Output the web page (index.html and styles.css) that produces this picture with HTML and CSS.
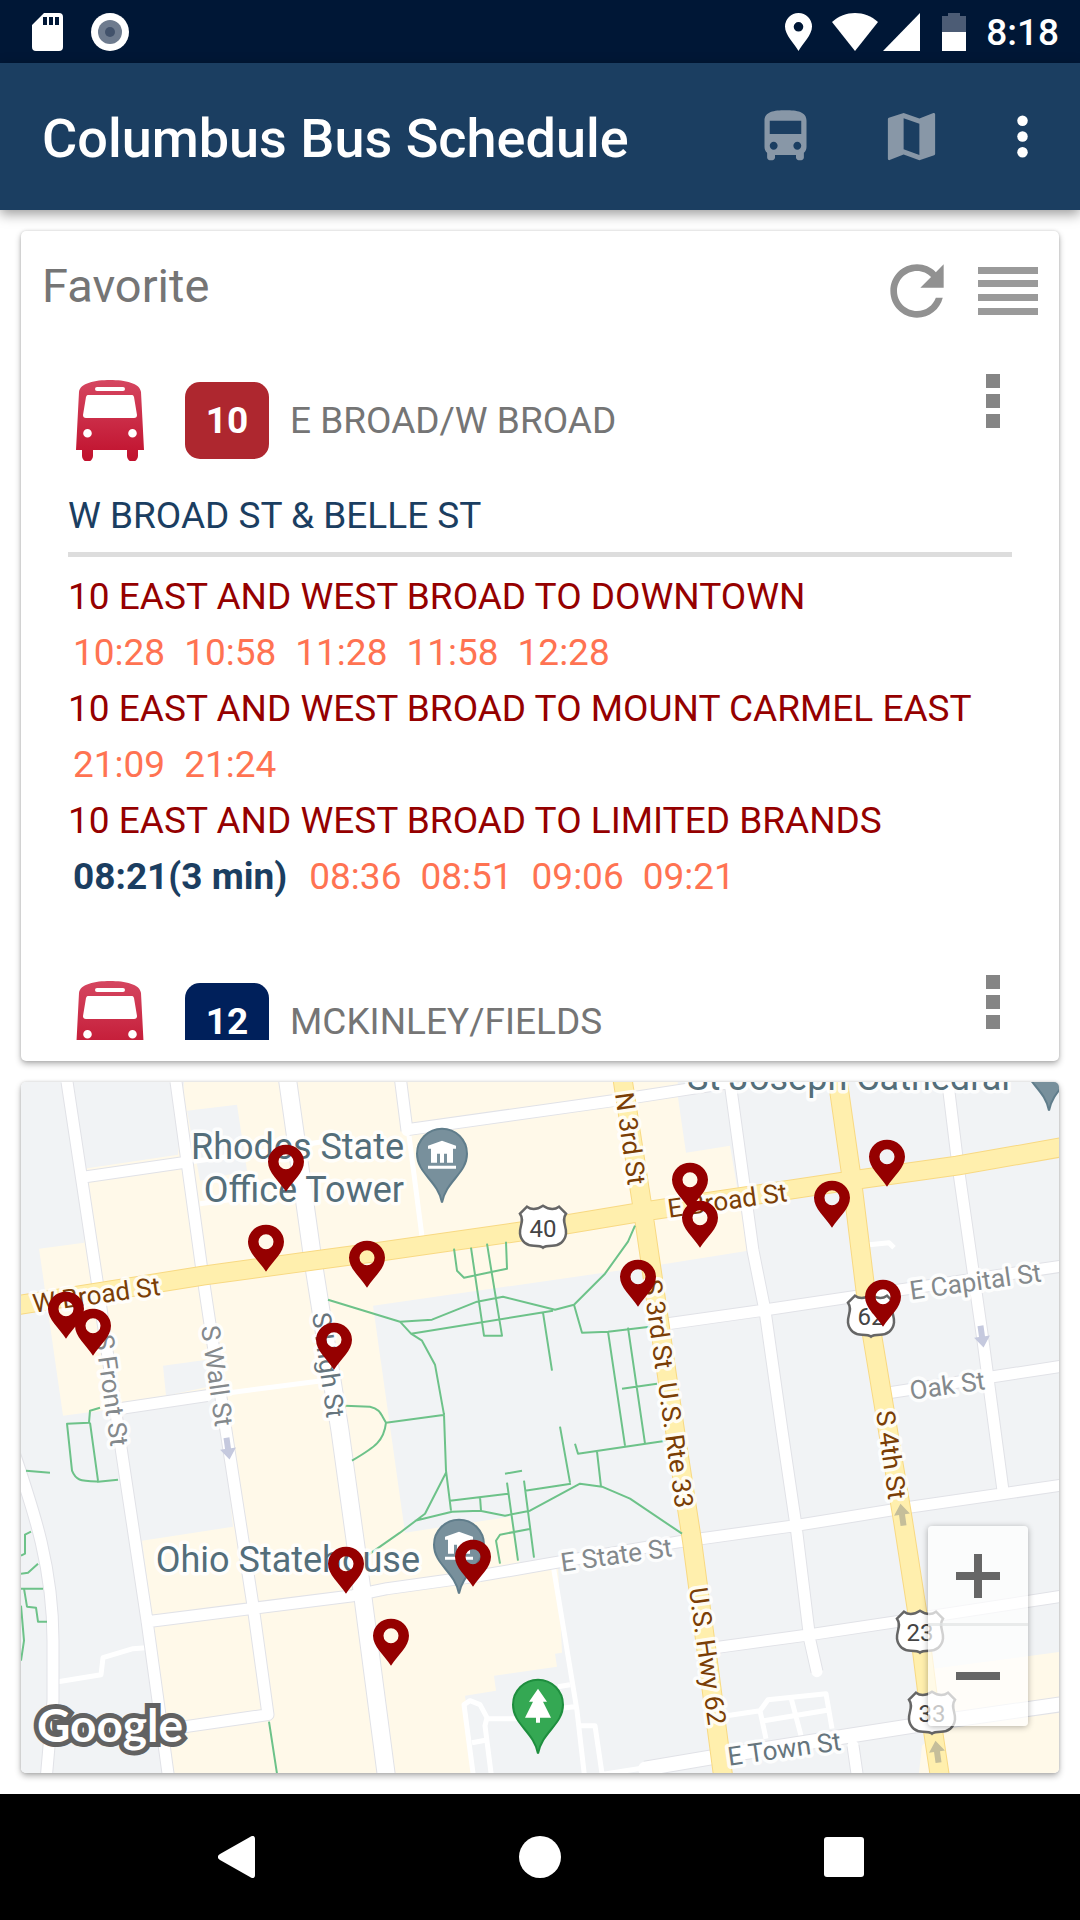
FILE: index.html
```html
<!DOCTYPE html>
<html lang="en">

<head>
    <meta charset="UTF-8">
    <meta name="viewport" content="width=device-width, initial-scale=1.0">
    <title>Columbus Bus Schedule</title>
    <link rel="stylesheet" href="styles.css">
</head>

<body>

    <!-- status bar -->
    <div class="status">
        <div class="status-left">
            <svg width="31" height="38" viewBox="0 0 31 38"><path fill="#fff" fill-rule="evenodd" d="M12 0h15a4 4 0 0 1 4 4v30a4 4 0 0 1-4 4H4a4 4 0 0 1-4-4V12zM11 4v8h4V4zm6 0v8h4V4zm6 0v8h4V4z"/></svg>
            <svg width="38" height="38" viewBox="0 0 38 38"><circle cx="19" cy="19" r="19" fill="#fff"/><circle cx="19" cy="19" r="12" fill="#6e7b8e"/><circle cx="19" cy="19" r="5" fill="#42526b"/></svg>
        </div>
        <div class="status-right">
            <svg class="loc" width="27" height="38" viewBox="0 0 27 38"><path fill="#fff" fill-rule="evenodd" d="M13.500 38C9 30 0 22 0 13.500a13.500 13.500 0 0 1 27 0C27 22 18 30 13.500 38zm0-29a4.800 4.800 0 1 0 0 9.600 4.800 4.800 0 0 0 0-9.600z"/></svg>
            <svg width="46" height="38" viewBox="0 0 46 38"><path fill="#fff" d="M0 9C13-3 33-3 46 9L23 38z"/></svg>
            <svg class="signal" width="37" height="38" viewBox="0 0 37 38"><path fill="#fff" d="M37 0v38H0z"/></svg>
            <svg class="battery" width="24" height="38" viewBox="0 0 24 38"><path fill="#4c5c75" d="M0 3h6V0h12v3h6v16H0z"/><path fill="#fff" d="M0 19h24v19H0z"/></svg>
            <span class="clock">8:18</span>
        </div>
    </div>

    <!-- app bar -->
    <header class="appbar">
        <h1>Columbus Bus Schedule</h1>
        <button class="tool" aria-label="Buses">
            <svg width="63" height="63" viewBox="0 0 24 24"><path d="M4 16c0 .88.39 1.670 1 2.220V20c0 .55.45 1 1 1h1c.55 0 1-.45 1-1v-1h8v1c0 .55.45 1 1 1h1c.55 0 1-.45 1-1v-1.780c.61-.55 1-1.340 1-2.220V6c0-3.500-3.580-4-8-4s-8 .5-8 4v10zm3.500 1c-.83 0-1.500-.67-1.500-1.500S6.670 14 7.500 14s1.500.67 1.500 1.500S8.330 17 7.500 17zm9 0c-.83 0-1.500-.67-1.500-1.500s.67-1.500 1.500-1.500 1.500.67 1.500 1.500-.67 1.500-1.500 1.500zm1.500-6H6V6h12v5z"/></svg>
        </button>
        <button class="tool" aria-label="Map">
            <svg width="63" height="63" viewBox="0 0 24 24"><path d="M20.500 3l-.16.03L15 5.100 9 3 3.360 4.900c-.21.07-.36.25-.36.48V20.500c0 .28.22.5.5.5l.16-.03L9 18.900l6 2.100 5.640-1.900c.21-.07.36-.25.36-.48V3.500c0-.28-.22-.5-.5-.5zM15 19l-6-2.110V5l6 2.110V19z"/></svg>
        </button>
        <button class="tool more" aria-label="More options">
            <svg width="63" height="63" viewBox="0 0 24 24"><circle cx="12" cy="6" r="2"/><circle cx="12" cy="12" r="2"/><circle cx="12" cy="18" r="2"/></svg>
        </button>
    </header>

    <main>
        <!-- favorite list -->
        <section class="card favorite">
            <div class="card-head">
                <h2>Favorite</h2>
                <button aria-label="Refresh">
                    <svg width="80" height="80" viewBox="0 0 24 24"><path fill="#919191" d="M17.650 6.350C16.200 4.900 14.210 4 12 4c-4.420 0-7.990 3.580-7.990 8s3.570 8 7.990 8c3.730 0 6.840-2.550 7.730-6h-2.080c-.82 2.330-3.040 4-5.650 4-3.310 0-6-2.690-6-6s2.690-6 6-6c1.660 0 3.140.69 4.220 1.780L13 11h7V4l-2.350 2.350z"/></svg>
                </button>
                <button aria-label="Reorder">
                    <svg width="60" height="48" viewBox="0 0 60 48"><path fill="#9a9a9a" d="M0 0h60v7H0zM0 13h60v7H0zM0 27h60v7H0zM0 41h60v7H0z"/></svg>
                </button>
            </div>

            <div class="list">
                <article class="item">
                    <div class="route">
                        <svg class="bus" width="68" height="81" viewBox="0 0 68 81"><use href="#bus"/></svg>
                        <span class="badge red">10</span>
                        <span class="name">E BROAD/W BROAD</span>
                        <button class="item-menu" aria-label="Route menu"><i></i><i></i><i></i></button>
                    </div>
                    <h3>W BROAD ST &amp; BELLE ST</h3>
                    <div class="trips">
                        <p class="dest">10 EAST AND WEST BROAD TO DOWNTOWN</p>
                        <p class="times"><span>10:28</span><span>10:58</span><span>11:28</span><span>11:58</span><span>12:28</span></p>
                        <p class="dest">10 EAST AND WEST BROAD TO MOUNT CARMEL EAST</p>
                        <p class="times"><span>21:09</span><span>21:24</span></p>
                        <p class="dest">10 EAST AND WEST BROAD TO LIMITED BRANDS</p>
                        <p class="times"><b>08:21(3 min)</b><span>08:36</span><span>08:51</span><span>09:06</span><span>09:21</span></p>
                    </div>
                </article>
                <article class="item">
                    <div class="route">
                        <svg class="bus" width="68" height="81" viewBox="0 0 68 81"><use href="#bus"/></svg>
                        <span class="badge navy">12</span>
                        <span class="name">MCKINLEY/FIELDS</span>
                        <button class="item-menu" aria-label="Route menu"><i></i><i></i><i></i></button>
                    </div>
                </article>
            </div>
        </section>

        <!-- map -->
        <section class="card map">
            <svg class="canvas" viewBox="21 1081 1038 692" preserveAspectRatio="xMidYMid slice">
                <defs>
                    <linearGradient id="busRed" x1="0" y1="0" x2="0" y2="1">
                        <stop offset="0" stop-color="#d54660"/>
                        <stop offset="1" stop-color="#c0102c"/>
                    </linearGradient>
                    <path id="bus" fill="url(#busRed)" fill-rule="evenodd" d="M3 12C4 3 19 0 34 0s30 3 31 12l3 58h-6v6a5 5 0 0 1-11 0v-6H17v6a5 5 0 0 1-11 0v-6H0zM21 7a2 2 0 0 0 0 4h26a2 2 0 0 0 0-4zM13 15c-2 0-2 0-3 2L7 35c0 2 1 3 3 3h48c2 0 3-1 3-3l-3-18c-1-2-1-2-3-2zM11.500 49a4.300 4.300 0 1 0 0 8.600 4.300 4.300 0 0 0 0-8.600zm45 0a4.300 4.300 0 1 0 0 8.600 4.300 4.300 0 0 0 0-8.600z"/>
                    <path id="pin" fill="#950000" fill-rule="evenodd" d="M0 0C-7-11-18-19-18-30A18 17 0 0 1 18-30C18-19 7-11 0 0zM0-37.500a7.500 7.500 0 1 0 0 15 7.500 7.500 0 0 0 0-15z"/>
                    <path id="drop" stroke-width="2" d="M0-1C-4-23-25-30-25-50A25 25 0 0 1 25-50C25-30 4-23 0-1z"/>
                    <g id="civic">
                        <use href="#drop" fill="#78909c" stroke="#607d8b"/>
                        <path fill="#fff" d="M-14-55v-3L0-63l14 5v3h-3v14h-6v-9h-3v9h-4v-9h-3v9h-6v-14zM-14-38h28v3h-28z"/>
                    </g>
                    <path id="shield" fill="#fff" stroke="#666" stroke-width="2.500" d="M-16-20c4 3 10 3 16-1 6 4 12 4 16 1l7 7c-5 7 1 13 0 20-1 8-7 12-14 12-4 0-7 0-9 2-2-2-5-2-9-2-7 0-13-4-14-12-1-7 5-13 0-20z"/>
                    <path id="arrow" d="M-3-11h6v11h5L0 11-8 0h5z"/>
                    <path id="roads" d="M67 1081 97 1280 121 1447 147 1620 169 1780M176 1081 202 1270 226 1430 253 1605 268 1714 165 1729M400 1075 407 1130M730 1081 753 1250 765 1310 782 1430 796 1525 810 1640 817 1671M947 1075 958 1165 983 1340 1003 1490M87 1176 183 1162M407 1129 613 1100 730 1082M668 1323 760 1310 847 1297 1065 1265M890 1392 1065 1365M147 1621 353 1595 387 1588 480 1575 555 1562 680 1541 795 1525 900 1508 1065 1484M715 1647 810 1634 910 1619 1065 1595M10 1440C30 1500 53 1560 53 1640V1700L46 1780M120 1408 207 1395M853 1745 858 1780"/>
                    <path id="townSt" d="M645 1768 710 1757 850 1735 933 1722 1065 1703"/>
                    <path id="highSt" d="M287 1075 313 1260 340 1430 363 1597 387 1780"/>
                    <path id="highways" d="M15 1305 203 1275 313 1260 380 1251 547 1227 643 1211 850 1180 957 1165 1065 1146M622 1075 643 1210 675 1430 692 1540 725 1790M837 1075 852 1180 868 1310 888 1430 903 1520 917 1610 927 1690 942 1790"/>
                </defs>

                <path fill="#f1f3f5" d="M0 1000h1080v900H0z"/>

                <!-- commercial blocks -->
                <path fill="#fff9e9" d="M184 1000H676L678 1097 686 1152 730 1145 748 1250 660 1264 373 1305 405 1532 510 1516 520 1562 558 1565 562 1652 555 1653 557 1666 494 1675 496 1690 465 1695 477 1790H175L142 1540 233 1526 220 1394 63 1415 39 1248 84 1242V1168L178 1154 184 1081z"/>
                <path fill="#fff9e9" d="M933 1668 1070 1650V1790H917L922 1745 945 1725z"/>
                <path fill="#f1f3f5" d="M187 1110 237 1104 247 1170 200 1180zM163 1365 207 1359 213 1385 166 1395z"/>

                <!-- streets -->
                <path class="lanes" d="M409 1135 422 1236M183 1162 250 1153 322 1141M200 1203 244 1197M207 1395 322 1380M58 1681 101 1674 103 1657 133 1648 146 1647M553 1564 577 1710 585 1780M580 1725 595 1725 602 1773M474 1780 464 1704 470 1700 480 1704 487 1717 485 1725 492 1780M487 1718 520 1718M472 1742 488 1739M558 1686 570 1684M558 1708 574 1706M600 1774 645 1767M720 1716 760 1710 768 1699 826 1693 832 1728M760 1710 766 1738M791 1697 801 1735M764 1720 830 1709M869 1244 889 1242 894 1247"/>
                <use href="#roads" class="casing"/>
                <use href="#townSt" class="casing town"/>
                <use href="#highSt" class="casing wide"/>
                <use href="#roads" class="road"/>
                <use href="#townSt" class="road town"/>
                <use href="#highSt" class="road wide"/>
                <use href="#highways" class="highway-edge"/>
                <use href="#highways" class="highway"/>

                <!-- foot paths -->
                <path class="foot" d="M328 1299 400 1321 432 1319 477 1301 503 1296 555 1309 574 1304 605 1273 628 1241 635 1225M400 1321 411 1333 422 1340 435 1364 444 1414 446 1470 451 1510M411 1333 553 1310M454 1248 457 1270 464 1277 507 1268 506 1241M471 1247 484 1335 502 1335 487 1243M543 1312 552 1370M574 1304 582 1332 608 1331 650 1326M608 1331 625 1445M628 1327 645 1443M622 1388 657 1383M575 1443 578 1453 666 1440M597 1451 601 1486M560 1426 570 1482M345 1405 370 1406C380 1408 381 1414 386 1422L445 1414M386 1422C384 1440 376 1446 352 1460M446 1472 425 1513 400 1532 360 1560M415 1520 452 1511 480 1510 505 1515 530 1510 580 1483 602 1486 630 1498 682 1533M450 1500 508 1493M480 1496 481 1510M507 1482 518 1560M524 1480 534 1557M505 1473 522 1470M525 1490 571 1483M500 1563 496 1540 500 1534 531 1528M100 1407 90 1410 89 1422 67 1423 72 1470C76 1480 80 1480 98 1481L118 1479M90 1422 98 1480M26 1470 50 1472M31 1531 25 1534V1553L21 1555M21 1573 28 1572 38 1563M21 1588H43M24 1588 27 1606 36 1607 38 1621 47 1621M21 1605 24 1640 21 1660M269 1721 277 1773"/>

                <!-- one way arrows -->
                <g fill="#c5c9de">
                    <use href="#arrow" transform="translate(228 1448) rotate(-8)"/>
                    <use href="#arrow" transform="translate(982 1336) rotate(-8)"/>
                </g>
                <g fill="#c5be9a">
                    <use href="#arrow" transform="translate(902 1514) rotate(172)"/>
                    <use href="#arrow" transform="translate(937 1751) rotate(172)"/>
                </g>

                <g class="street major">
                    <text transform="translate(34 1312) rotate(-8)">W Broad St</text>
                    <text transform="translate(669 1217) rotate(-8)">E Broad St</text>
                    <text transform="translate(615 1093) rotate(82)">N 3rd St</text>
                    <text transform="translate(643 1280) rotate(82)">S 3rd St</text>
                    <text transform="translate(658 1383) rotate(82)">U.S. Rte 33</text>
                    <text transform="translate(689 1588) rotate(82)">U.S. Hwy 62</text>
                    <text transform="translate(876 1411) rotate(82)">S 4th St</text>
                </g>
                <g class="street">
                    <text transform="translate(911 1299) rotate(-8)">E Capital St</text>
                    <text transform="translate(911 1399) rotate(-8)">Oak St</text>
                    <text transform="translate(562 1571) rotate(-8)">E State St</text>
                    <text transform="translate(95 1335) rotate(82)">S Front St</text>
                    <text transform="translate(201 1326) rotate(82)">S Wall St</text>
                </g>
                <g class="street dark">
                    <text transform="translate(729 1765) rotate(-8)">E Town St</text>
                    <text transform="translate(312 1313) rotate(82)">S High St</text>
                </g>

                <g class="highway-no">
                    <use href="#shield" x="543" y="1226"/><text x="543" y="1236">40</text>
                    <use href="#shield" x="871" y="1315"/><text x="871" y="1324">62</text>
                    <use href="#shield" x="920" y="1631"/><text x="920" y="1640">23</text>
                    <use href="#shield" x="932" y="1712"/><text x="932" y="1721">33</text>
                </g>

                <g class="poi">
                    <text x="404" y="1158" text-anchor="end">Rhodes State</text>
                    <text x="404" y="1201" text-anchor="end">Office Tower</text>
                    <text x="420" y="1571" text-anchor="end">Ohio Statehouse</text>
                    <text x="1010" y="1089" text-anchor="end">St Joseph Cathedral</text>
                </g>
                <use href="#civic" x="442" y="1203"/>
                <use href="#civic" x="459" y="1594"/>
                <use href="#civic" x="1049" y="1111"/>
                <use href="#drop" x="538" y="1754" fill="#34a853" stroke="#1e8e3e"/>
                <path fill="#fff" d="M538 1688l9 13h-4l8 16h-11v5h-4v-5h-11l8-16h-4z"/>

                <!-- stops -->
                <use href="#pin" x="286" y="1191"/>
                <use href="#pin" x="266" y="1271"/>
                <use href="#pin" x="367" y="1287"/>
                <use href="#pin" x="66" y="1338"/>
                <use href="#pin" x="93" y="1355"/>
                <use href="#pin" x="334" y="1369"/>
                <use href="#pin" x="690" y="1209"/>
                <use href="#pin" x="700" y="1247"/>
                <use href="#pin" x="638" y="1306"/>
                <use href="#pin" x="832" y="1227"/>
                <use href="#pin" x="887" y="1186"/>
                <use href="#pin" x="883" y="1326"/>
                <use href="#pin" x="346" y="1593"/>
                <use href="#pin" x="391" y="1665"/>
                <use href="#pin" x="473" y="1586"/>

                <text class="google" x="37" y="1741">Google</text>
            </svg>

            <div class="zoom">
                <button aria-label="Zoom in"><svg width="44" height="44" viewBox="0 0 44 44"><path fill="#666" d="M18 0h8v18h18v8H26v18h-8V26H0v-8h18z"/></svg></button>
                <button aria-label="Zoom out"><svg width="44" height="44" viewBox="0 0 44 44"><path fill="#666" d="M0 18h44v8H0z"/></svg></button>
            </div>
        </section>
    </main>

    <!-- system navigation -->
    <nav class="sysnav">
        <button aria-label="Back"><svg width="37" height="42" viewBox="0 0 37 42"><path fill="#fff" d="M32 1c3-2 5-1 5 2v36c0 3-2 4-5 2L2 24c-3-2-3-4 0-6z"/></svg></button>
        <button aria-label="Home"><svg width="42" height="42" viewBox="0 0 42 42"><circle cx="21" cy="21" r="21" fill="#fff"/></svg></button>
        <button aria-label="Recent apps"><svg width="40" height="40" viewBox="0 0 40 40"><rect width="40" height="40" rx="3" fill="#fff"/></svg></button>
    </nav>

</body>

</html>
```

FILE: styles.css
```css
* {
    padding: 0;
    margin: 0;
    box-sizing: border-box;
}

body {
    display: flex;
    flex-direction: column;
    height: 100vh;
    background-color: #fff;
    font-family: Roboto, "Liberation Sans", sans-serif;
    font-size: 37px;
    color: #757575;
}

button {
    display: flex;
    align-items: center;
    justify-content: center;
    border: none;
    background: none;
}

svg {
    display: block;
    flex: none;
}

/* status bar */
.status {
    display: flex;
    justify-content: space-between;
    flex: none;
    height: 63px;
    padding: 0 21px 0 32px;
    background-color: #001736;
    color: #fff;
}

.status-left,
.status-right {
    display: flex;
    align-items: center;
}

.status-left {
    gap: 28px;
}

.loc {
    margin-right: 20px;
}

.signal {
    margin-left: 5px;
}

.battery {
    margin: 0 20px 0 22px;
}

.clock {
    padding-top: 3px;
    font-weight: 500;
    line-height: 60px;
}

/* app bar */
.appbar {
    display: flex;
    align-items: center;
    flex: none;
    height: 147px;
    padding-left: 42px;
    padding-right: 10px;
    background-color: #1b3e61;
    box-shadow: 0 4px 12px rgba(0, 0, 0, 0.4);
}

.appbar h1 {
    flex: 1;
    padding-top: 3px;
    font-size: 54px;
    font-weight: 500;
    white-space: nowrap;
    color: #fff;
}

.tool {
    width: 126px;
    height: 126px;
    fill: #8897a7;
}

.more {
    width: 96px;
    fill: #fff;
}

/* cards */
main {
    flex: 1;
    min-height: 0;
    display: flex;
    flex-direction: column;
    gap: 21px;
    padding: 21px;
}

.card {
    min-height: 0;
    border-radius: 5px;
    background-color: #fff;
    box-shadow: 0 3px 6px rgba(0, 0, 0, 0.3), 0 0 3px rgba(0, 0, 0, 0.15);
    overflow: hidden;
}

.favorite {
    flex: 6 1 0;
    display: flex;
    flex-direction: column;
}

.card-head {
    display: flex;
    align-items: center;
    gap: 21px;
    flex: none;
    height: 120px;
    padding: 0 21px;
}

.card-head h2 {
    flex: 1;
    padding-bottom: 11px;
    font-size: 47px;
    font-weight: 400;
}

.list {
    flex: 1;
    min-height: 0;
    margin-bottom: 21px;
    overflow: hidden;
}

.item {
    padding: 23px 47px 47px;
}

.route {
    display: flex;
    align-items: center;
    height: 92px;
    padding-left: 8px;
    padding-right: 12px;
}

.badge {
    width: 84px;
    height: 77px;
    margin-left: 41px;
    margin-right: 21px;
    border-radius: 15px;
    line-height: 77px;
    text-align: center;
    font-weight: 700;
    color: #fff;
}

.red {
    background-color: #ae272f;
}

.navy {
    background-color: #00205b;
}

.name {
    flex: 1;
}

.item-menu {
    align-self: flex-start;
    flex-direction: column;
    gap: 6px;
}

.item-menu i {
    width: 14px;
    height: 14px;
    background-color: #858585;
}

.item h3 {
    margin-top: 22px;
    padding-bottom: 8px;
    border-bottom: 5px solid #ddd;
    font-size: 37px;
    font-weight: 400;
    line-height: 56px;
    color: #1b3e61;
}

.trips {
    margin-top: 12px;
    line-height: 56px;
    white-space: nowrap;
}

.dest {
    color: #950000;
}

.times {
    display: flex;
    gap: 19px;
    padding-left: 5px;
    color: #ff7352;
}

.times b {
    margin-right: 3px;
    color: #1b3e61;
}

/* map */
.map {
    flex: 5 1 0;
    position: relative;
}

.canvas {
    width: 100%;
    height: 100%;
}

.casing,
.road,
.lanes,
.highway,
.highway-edge,
.foot {
    fill: none;
    stroke-linejoin: round;
}

.casing {
    stroke: #e1e2e7;
    stroke-width: 13px;
}

.casing.town {
    stroke-width: 16px;
}

.casing.wide {
    stroke-width: 19px;
}

.road {
    stroke: #fff;
    stroke-width: 11px;
    stroke-linecap: round;
}

.road.town {
    stroke-width: 14px;
}

.road.wide {
    stroke-width: 17px;
}

.lanes {
    stroke: #fff;
    stroke-width: 5px;
}

.highway-edge {
    stroke: #f8d983;
    stroke-width: 20px;
}

.highway {
    stroke: #ffefad;
    stroke-width: 18px;
}

.foot {
    stroke: #6dc289;
    stroke-width: 2px;
}

.street text,
.poi text {
    stroke: #fff;
    stroke-opacity: 0.85;
    stroke-width: 7px;
    stroke-linejoin: round;
    paint-order: stroke;
}

.street {
    font-size: 26px;
    fill: #84898c;
}

.major {
    fill: #7a3e06;
}

.dark {
    fill: #66757d;
}

.poi {
    font-size: 36px;
    fill: #546e7a;
}

.highway-no {
    font-size: 24px;
    text-anchor: middle;
    fill: #444;
}

.google {
    font-family: Lato, "Open Sans", sans-serif;
    font-size: 46px;
    font-weight: 700;
    fill: #fff;
    stroke: #626262;
    stroke-width: 10px;
    paint-order: stroke;
}

.zoom {
    position: absolute;
    right: 31px;
    bottom: 47px;
    width: 100px;
    border-radius: 4px;
    background-color: rgba(255, 255, 255, 0.7);
    box-shadow: 0 1px 6px rgba(0, 0, 0, 0.3);
}

.zoom button {
    width: 100px;
    height: 100px;
}

.zoom button + button {
    box-shadow: 0 -3px 0 rgba(225, 228, 228, 0.7);
}

/* system navigation */
.sysnav {
    display: grid;
    grid-template-columns: repeat(3, 1fr);
    flex: none;
    height: 126px;
    padding: 0 84px;
    background-color: #000;
}
```
